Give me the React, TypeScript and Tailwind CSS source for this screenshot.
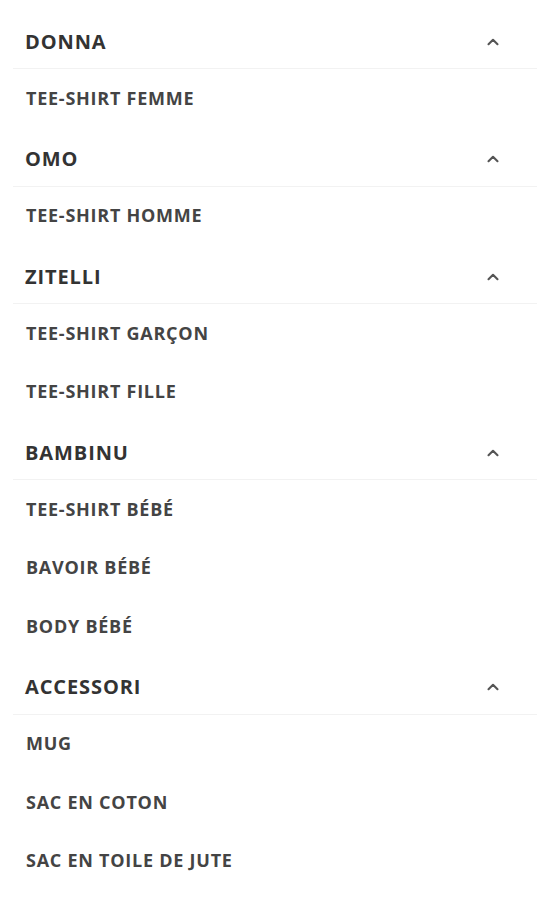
import { ChevronUp } from "lucide-react";

const groups = [
  { title: "DONNA", items: ["TEE-SHIRT FEMME"] },
  { title: "OMO", items: ["TEE-SHIRT HOMME"] },
  { title: "ZITELLI", items: ["TEE-SHIRT GARÇON", "TEE-SHIRT FILLE"] },
  { title: "BAMBINU", items: ["TEE-SHIRT BÉBÉ", "BAVOIR BÉBÉ", "BODY BÉBÉ"] },
  { title: "ACCESSORI", items: ["MUG", "SAC EN COTON", "SAC EN TOILE DE JUTE"] },
];

export default function App() {
  return (
    <div
      className="min-h-[900px] w-[550px] bg-white pt-[10px]"
      style={{ fontFamily: '"Open Sans", sans-serif' }}
    >
      {groups.map((g) => (
        <section key={g.title}>
          <div className="mx-[13px] flex h-[59px] items-center justify-between border-b border-[#f2f2f2] pl-[12px] pr-[35px] pt-[5px]">
            <span className="text-[20px] font-bold tracking-[0.9px] text-[#333]">
              {g.title}
            </span>
            <ChevronUp size={18} strokeWidth={2.8} className="text-[#555]" />
          </div>
          <ul>
            {g.items.map((it) => (
              <li
                key={it}
                className="flex h-[58.5px] items-center pl-[26px] text-[18px] font-bold tracking-[0.75px] text-[#444]"
              >
                {it}
              </li>
            ))}
          </ul>
        </section>
      ))}
    </div>
  );
}
